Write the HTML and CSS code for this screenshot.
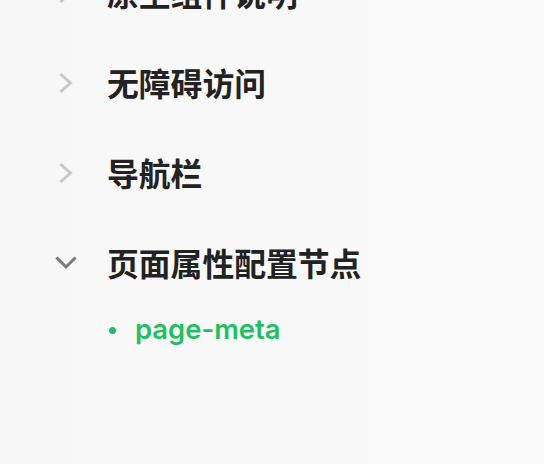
FILE: index.html
```html
<!DOCTYPE html>
<html lang="zh-CN">
<head>
<meta charset="utf-8">
<link rel="stylesheet" href="styles.css">
</head>
<body>
<ul class="menu">
  <li class="item">
    <span class="icon"><svg viewBox="0 0 24 24" width="24" height="24"><polyline class="chev-r" points="7.5,4 16.5,12 7.5,20"/></svg></span>
    <span class="label">原生组件说明</span>
  </li>
  <li class="item">
    <span class="icon"><svg viewBox="0 0 24 24" width="24" height="24"><polyline class="chev-r" points="7.5,4 16.5,12 7.5,20"/></svg></span>
    <span class="label">无障碍访问</span>
  </li>
  <li class="item">
    <span class="icon"><svg viewBox="0 0 24 24" width="24" height="24"><polyline class="chev-r" points="7.5,4 16.5,12 7.5,20"/></svg></span>
    <span class="label">导航栏</span>
  </li>
  <li class="item">
    <span class="icon"><svg viewBox="0 0 24 24" width="24" height="24"><polyline class="chev-d" points="3.5,7.5 12,16 20.5,7.5"/></svg></span>
    <span class="label">页面属性配置节点</span>
  </li>
  <li class="sub">
    <span class="dot"></span>
    <span class="sublabel">page-meta</span>
  </li>
</ul>
</body>
</html>
```

FILE: styles.css
```css
html, body {
  margin: 0;
  padding: 0;
  height: 100%;
}
body {
  background: linear-gradient(90deg, #f6f6f6 0%, #f8f8f8 18%, #f9f9f9 60%, #fafafa 100%);
  font-family: "Noto Sans CJK SC", "Noto Sans", sans-serif;
  overflow: hidden;
}
.menu {
  list-style: none;
  margin: -52px 0 0 0;
  padding: 0;
}
.item {
  display: flex;
  align-items: center;
  height: 90px;
}
.icon {
  display: flex;
  width: 24px;
  height: 24px;
  margin-left: 54px;
  margin-right: 29px;
}
.icon svg {
  display: block;
}
.chev-r {
  fill: none;
  stroke: #c8c8c8;
  stroke-width: 3;
  stroke-linecap: square;
}
.chev-d {
  fill: none;
  stroke: #7a7a7a;
  stroke-width: 3;
  stroke-linecap: square;
}
.label {
  font-size: 31.8px;
  font-weight: 700;
  color: #222222;
  line-height: 1;
}
.sub {
  display: flex;
  align-items: center;
  height: 44px;
  padding-left: 109px;
}
.dot {
  width: 7px;
  height: 7px;
  border-radius: 50%;
  background: #1ec162;
  margin-right: 19px;
}
.sublabel {
  font-family: Inter, "Noto Sans", sans-serif;
  font-size: 27.4px;
  font-weight: 600;
  color: #1ec162;
  line-height: 1;
}
```
